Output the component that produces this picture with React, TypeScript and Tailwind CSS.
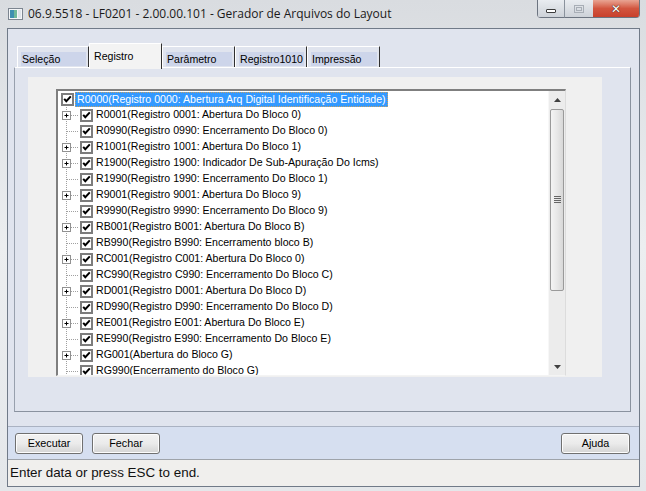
import React from "react";

type Row = { label: string; kind: "root" | "plus" | "leaf" };

const rows: Row[] = [
  { label: "R0000(Registro 0000: Abertura Arq Digital Identificação Entidade)", kind: "root" },
  { label: "R0001(Registro 0001: Abertura Do Bloco 0)", kind: "plus" },
  { label: "R0990(Registro 0990: Encerramento Do Bloco 0)", kind: "leaf" },
  { label: "R1001(Registro 1001: Abertura Do Bloco 1)", kind: "plus" },
  { label: "R1900(Registro 1900: Indicador De Sub-Apuração Do Icms)", kind: "plus" },
  { label: "R1990(Registro 1990: Encerramento Do Bloco 1)", kind: "leaf" },
  { label: "R9001(Registro 9001: Abertura Do Bloco 9)", kind: "plus" },
  { label: "R9990(Registro 9990: Encerramento Do Bloco 9)", kind: "leaf" },
  { label: "RB001(Registro B001: Abertura Do Bloco B)", kind: "plus" },
  { label: "RB990(Registro B990: Encerramento bloco B)", kind: "leaf" },
  { label: "RC001(Registro C001: Abertura Do Bloco 0)", kind: "plus" },
  { label: "RC990(Registro C990: Encerramento Do Bloco C)", kind: "leaf" },
  { label: "RD001(Registro D001: Abertura Do Bloco D)", kind: "plus" },
  { label: "RD990(Registro D990: Encerramento Do Bloco D)", kind: "leaf" },
  { label: "RE001(Registro E001: Abertura Do Bloco E)", kind: "plus" },
  { label: "RE990(Registro E990: Encerramento Do Bloco E)", kind: "leaf" },
  { label: "RG001(Abertura do Bloco G)", kind: "plus" },
  { label: "RG990(Encerramento do Bloco G)", kind: "leaf" },
];

const tabs = [
  { label: "Seleção", w: "w-[72px]" },
  { label: "Registro", w: "w-[73px]", active: true },
  { label: "Parâmetro", w: "w-[73px]" },
  { label: "Registro1010", w: "w-[72px]" },
  { label: "Impressão", w: "w-[73px]" },
];

function CheckBox() {
  return (
    <svg width="13" height="13" viewBox="0 0 13 13" className="shrink-0">
      <rect x="0" y="0" width="13" height="13" fill="#7d7d7d" />
      <rect x="2" y="2" width="9" height="9" fill="#ffffff" />
      <polyline points="3.2,5.8 5.3,8.2 9.8,3.4" fill="none" stroke="#000" strokeWidth="2" />
    </svg>
  );
}

function Connector({ plus }: { plus: boolean }) {
  return (
    <svg width="22" height="16" viewBox="0 0 22 16" className="shrink-0">
      <line x1="8.5" y1="0" x2="8.5" y2="16" stroke="#a0a0a0" strokeDasharray="1 1" />
      <line x1={plus ? 13 : 9} y1="8.5" x2="21" y2="8.5" stroke="#a0a0a0" strokeDasharray="1 1" />
      {plus && (
        <>
          <rect x="4.5" y="4.5" width="8" height="8" fill="#fff" stroke="#919191" />
          <line x1="6.5" y1="8.5" x2="10.5" y2="8.5" stroke="#000" />
          <line x1="8.5" y1="6.5" x2="8.5" y2="10.5" stroke="#000" />
        </>
      )}
    </svg>
  );
}

function TreeRow({ row }: { row: Row }) {
  if (row.kind === "root") {
    return (
      <div className="h-[16px] flex items-center">
        <div className="ml-[3px]">
          <CheckBox />
        </div>
        <span className="ml-[1px] h-[15px] leading-[13px] px-[1px] bg-[#3399ff] text-white border border-dotted border-[#c8a060] whitespace-nowrap">
          {row.label}
        </span>
      </div>
    );
  }
  return (
    <div className="h-[16px] flex items-center">
      <Connector plus={row.kind === "plus"} />
      <CheckBox />
      <span className="ml-[3px] whitespace-nowrap text-black">{row.label}</span>
    </div>
  );
}

function Scrollbar() {
  return (
    <div className="w-[17px] shrink-0 flex flex-col bg-[#ececec] border-l border-[#f7f7f7]">
      <div className="h-[17px] flex items-center justify-center">
        <svg width="7" height="4" viewBox="0 0 7 4">
          <polygon points="0,4 3.5,0 7,4" fill="#404040" />
        </svg>
      </div>
      <div className="flex-1 pt-[1px]">
        <div className="h-[182px] mx-[1px] rounded-[2px] border border-[#9a9a9a] bg-gradient-to-r from-[#f4f4f4] via-[#e8e8e8] to-[#d8d8d8] flex items-center justify-center">
          <svg width="7" height="8" viewBox="0 0 7 8">
            <line x1="0" y1="0.5" x2="7" y2="0.5" stroke="#666" />
            <line x1="0" y1="2.5" x2="7" y2="2.5" stroke="#666" />
            <line x1="0" y1="4.5" x2="7" y2="4.5" stroke="#666" />
            <line x1="0" y1="6.5" x2="7" y2="6.5" stroke="#666" />
          </svg>
        </div>
      </div>
      <div className="h-[17px] flex items-center justify-center">
        <svg width="7" height="4" viewBox="0 0 7 4">
          <polygon points="0,0 3.5,4 7,0" fill="#404040" />
        </svg>
      </div>
    </div>
  );
}

function WinButton({ children, className }: { children: React.ReactNode; className: string }) {
  return (
    <button className={`h-[18px] flex items-center justify-center border-b border-[#6c7480] ${className}`}>
      {children}
    </button>
  );
}

function DlgButton({ label, w }: { label: string; w: string }) {
  return (
    <button
      className={`${w} h-[21px] rounded-[3px] border border-[#707070] bg-gradient-to-b from-[#f2f2f2] via-[#ebebeb] to-[#d4d4d4] text-[10.8px] text-black shadow-[inset_0_0_0_1px_#fcfcfc]`}
    >
      {label}
    </button>
  );
}

export default function App() {
  return (
    <div className="w-[646px] h-[491px] overflow-hidden relative bg-gradient-to-b from-[#d9dce0] via-[#eceef0] to-[#e4e7ea] font-['Liberation_Sans',Arial,sans-serif] text-[10.6px] text-black">
      {/* Title bar */}
      <div className="h-[28px] flex items-center pl-[8px]">
        <svg width="15" height="12" viewBox="0 0 15 12" className="shrink-0">
          <rect x="0.5" y="0.5" width="14" height="11" fill="#f4f6f8" stroke="#7c8590" />
          <rect x="2" y="2" width="4" height="8" fill="#3d8fb0" />
          <rect x="6" y="2" width="3" height="8" fill="#6fb89a" />
          <rect x="10" y="2" width="3" height="8" fill="#dfe4ea" />
        </svg>
        <span className="ml-[5px] font-['Open_Sans',sans-serif] text-[12px] text-[#1a1a1a] whitespace-nowrap">
          06.9.5518 - LF0201 - 2.00.00.101 - Gerador de Arquivos do Layout
        </span>
      </div>

      {/* Caption buttons */}
      <div className="absolute top-0 left-[537px] flex rounded-b-[4px] overflow-hidden border-x border-[#6c7480]">
        <WinButton className="w-[27px] bg-gradient-to-b from-[#e9ecf0] to-[#cdd2d8] border-r border-r-[#8a929c]">
          <span className="w-[10px] h-[4px] bg-white border border-[#3c3c3c] rounded-[1px] mt-[5px]" />
        </WinButton>
        <WinButton className="w-[28px] bg-gradient-to-b from-[#e9ecf0] to-[#cdd2d8]">
          <span className="w-[10px] h-[8px] border border-[#a8aeb6] flex items-center justify-center">
            <span className="w-[6px] h-[4px] border border-[#a8aeb6]" />
          </span>
        </WinButton>
        <WinButton className="w-[46px] bg-gradient-to-b from-[#e8a493] via-[#d2553f] to-[#c8402c]">
          <span className="text-white font-['DejaVu_Sans',sans-serif] font-bold text-[12px] leading-none [text-shadow:0_0_1px_#3a1a10,0_0_1px_#3a1a10]">
            ✕
          </span>
        </WinButton>
      </div>

      {/* Client area */}
      <div className="ml-[7px] w-[633px] border border-[#707a88] flex flex-col">
        <div className="bg-[#e0e4ee]">
          {/* Tabs */}
          <div className="pt-[14px] pl-[9px] h-[38px] flex items-end">
            {tabs.map((t) =>
              t.active ? (
                <div
                  key={t.label}
                  className={`${t.w} h-[26px] -mb-[2px] relative z-10 bg-[#f3f3f3] border-t border-l border-white border-r border-r-[#303030] pl-[4px] pt-[5px]`}
                >
                  {t.label}
                </div>
              ) : (
                <div
                  key={t.label}
                  className={`${t.w} h-[21px] border-t border-l border-white border-r border-r-[#303030] pl-[3px] pr-[2px] pt-[5px]`}
                >
                  <div className="h-[14px] bg-[#cdd5ea] pl-[1px] leading-[14px] whitespace-nowrap">
                    {t.label}
                  </div>
                </div>
              )
            )}
          </div>

          {/* Tab panel */}
          <div className="ml-[6px] w-[617px] h-[345px] border-t border-t-white border-l border-l-[#98a0ad] border-r border-r-[#8a929f] border-b border-b-[#8a929f] pl-[13px] pt-[9px]">
            <div className="w-[574px] h-[300px] bg-[#f0f0f0] pl-[28px] pt-[12px]">
              <div className="w-[510px] h-[287px] bg-white border-t-2 border-l-2 border-[#7f7f7f] border-r border-r-[#dcdcdc] border-b border-b-[#f4f4f4] flex overflow-hidden">
                <div className="flex-1 overflow-hidden">
                  {rows.map((r) => (
                    <TreeRow key={r.label} row={r} />
                  ))}
                </div>
                <Scrollbar />
              </div>
            </div>
          </div>
          <div className="h-[14px]" />
        </div>

        {/* Button bar */}
        <div className="h-[33px] border-t border-[#aab2c2] bg-[#d6dff0] flex items-center pl-[7px] pr-[9px]">
          <DlgButton label="Executar" w="w-[68px]" />
          <div className="ml-[9px]">
            <DlgButton label="Fechar" w="w-[68px]" />
          </div>
          <div className="ml-auto">
            <DlgButton label="Ajuda" w="w-[69px]" />
          </div>
        </div>

        {/* Status bar */}
        <div className="h-[27px] border-t border-[#9ea3aa] bg-[#f0efed] flex items-center pl-[2px] text-[13.4px] text-[#111]">
          Enter data or press ESC to end.
        </div>
      </div>
    </div>
  );
}
